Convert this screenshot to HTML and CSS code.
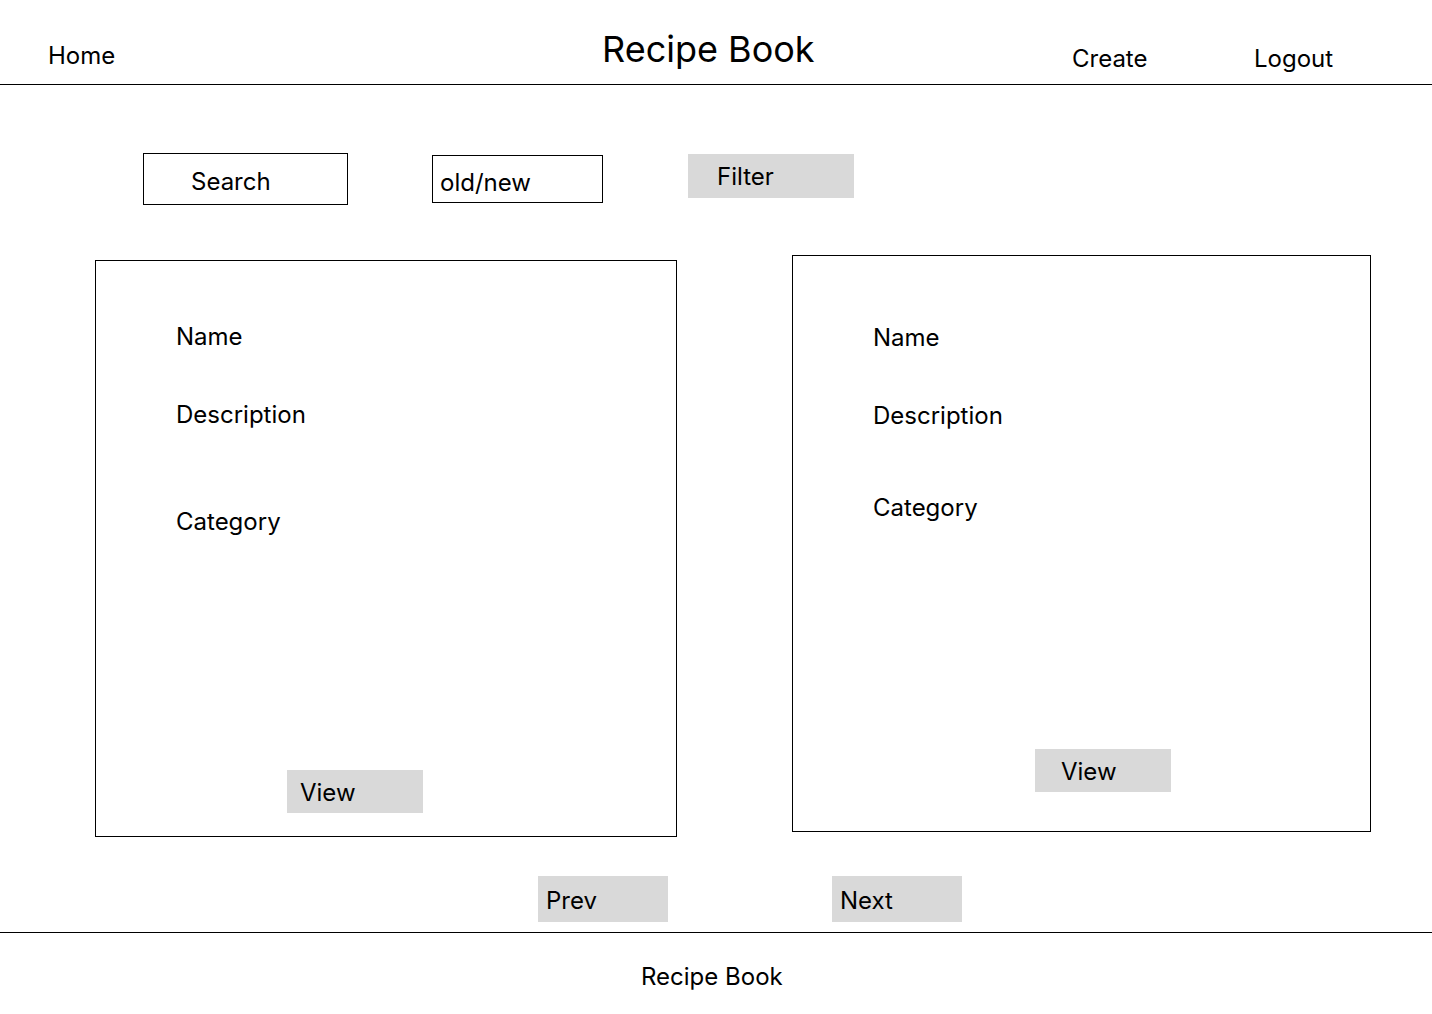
FILE: index.html
```html
<!DOCTYPE html>
<html lang="en">
<head>
    <meta charset="UTF-8">
    <meta name="viewport" content="width=device-width, initial-scale=1.0">
    <title>Recipe Book</title>
    <link rel="stylesheet" href="styles.css">
</head>
<body>
    <header class="topbar">
        <a href="#" class="nav-home">Home</a>
        <h1 class="site-title">Recipe Book</h1>
        <a href="#" class="nav-link">Create</a>
        <a href="#" class="nav-link">Logout</a>
    </header>

    <div class="toolbar">
        <div class="search-box">Search</div>
        <div class="sort-box">old/new</div>
        <div class="filter-btn">Filter</div>
    </div>

    <div class="cards">
        <div class="card card-left">
            <p class="field field-name">Name</p>
            <p class="field field-desc">Description</p>
            <p class="field field-cat">Category</p>
            <a href="#" class="view-btn">View</a>
        </div>
        <div class="card card-right">
            <p class="field field-name">Name</p>
            <p class="field field-desc">Description</p>
            <p class="field field-cat">Category</p>
            <a href="#" class="view-btn">View</a>
        </div>
    </div>

    <div class="pager">
        <a href="#" class="page-btn">Prev</a>
        <a href="#" class="page-btn">Next</a>
    </div>

    <footer class="footer">Recipe Book</footer>
</body>
</html>
```

FILE: styles.css
```css
* { box-sizing: border-box; }
body { margin: 0; font-family: Inter, "Noto Sans", sans-serif; font-size: 24px; line-height: 29px; color: #000; background-color: #fff; }
a { color: #000; text-decoration: none; }

/* header */
.topbar { display: grid; grid-template-columns: 554px 470px 182px auto; align-items: start; padding-left: 48px; height: 85px; border-bottom: 1px solid #000; }
.nav-home { margin-top: 41px; }
.site-title { margin: 27px 0 0; font-size: 36px; line-height: 44px; font-weight: 400; }
.nav-link { margin-top: 44px; }

/* search row */
.toolbar { display: flex; align-items: flex-start; padding-left: 143px; margin-top: 68px; }
.search-box { width: 205px; height: 52px; border: 1px solid #000; padding: 13px 0 0 47px; }
.sort-box { width: 171px; height: 48px; margin: 2px 0 0 84px; border: 1px solid #000; padding: 12px 0 0 7px; }
.filter-btn { width: 166px; height: 44px; margin: 1px 0 0 85px; background-color: #d9d9d9; padding: 8px 0 0 29px; }

/* recipe cards */
.cards { display: flex; align-items: flex-start; gap: 115px; padding-left: 95px; margin-top: 50px; }
.card { display: flex; flex-direction: column; align-items: flex-start; height: 577px; border: 1px solid #000; padding-left: 80px; }
.card-left { width: 582px; margin-top: 5px; padding-top: 61px; }
.card-right { width: 579px; padding-top: 67px; }
.field { margin: 0; }
.field-desc { margin-top: 49px; }
.card-left .field-cat { margin-top: 78px; }
.card-right .field-cat { margin-top: 63px; }
.view-btn { width: 136px; height: 43px; margin-top: auto; background-color: #d9d9d9; padding-top: 8px; }
.card-left .view-btn { margin-left: 111px; margin-bottom: 23px; padding-left: 13px; }
.card-right .view-btn { margin-left: 162px; margin-bottom: 39px; padding-left: 26px; }

/* paging */
.pager { display: flex; gap: 164px; padding-left: 538px; margin-top: 39px; }
.page-btn { width: 130px; height: 46px; background-color: #d9d9d9; padding: 10px 0 0 8px; }

.footer { margin-top: 10px; border-top: 1px solid #000; padding: 29px 0 0 641px; height: 82px; }
```
